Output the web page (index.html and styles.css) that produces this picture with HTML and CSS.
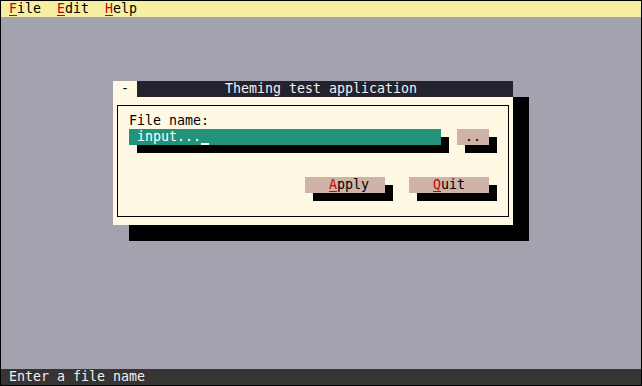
FILE: index.html
```html
<!DOCTYPE html>
<html>
<head>
<meta charset="utf-8">
<link rel="stylesheet" href="styles.css">
</head>
<body>
<div class="screen">
  <div class="menubar">
    <span class="menu-item"><span class="hk">F</span>ile</span>
    <span class="menu-item"><span class="hk">E</span>dit</span>
    <span class="menu-item"><span class="hk">H</span>elp</span>
  </div>
  <div class="desktop">
    <div class="dialog">
      <div class="titlebar">
        <span class="close">-</span>
        <span class="title">Theming test application</span>
      </div>
      <div class="body">
        <div class="frame">
          <div class="label">File name:</div>
          <div class="input-row">
            <div class="input">input...<span class="cursor"></span></div>
            <div class="btn btn-small">..</div>
          </div>
          <div class="actions">
            <div class="btn"><span class="hk">A</span>pply</div>
            <div class="btn"><span class="hk">Q</span>uit</div>
          </div>
        </div>
      </div>
    </div>
  </div>
  <div class="status">Enter a file name</div>
</div>
</body>
</html>
```
FILE: styles.css
```css
html, body {
  background: #000;
}
body {
  margin: 1px;
  font-family: "DejaVu Sans Mono", "Liberation Mono", monospace;
  font-size: 13.29px;
  line-height: 16px;
}
.screen {
  width: 640px;
  height: 384px;
  display: flex;
  flex-direction: column;
  white-space: nowrap;
}
.menubar {
  height: 16px;
  flex: none;
  background: #f7efa0;
  color: #000;
  display: flex;
}
.menu-item {
  padding: 0 8px;
}
.hk {
  color: #d00000;
  text-decoration: underline;
  text-decoration-thickness: 1px;
  text-underline-offset: 2px;
}
.desktop {
  flex: 1;
  background: #a3a3b0;
  position: relative;
}
.dialog {
  position: absolute;
  left: 112px;
  top: 64px;
  width: 400px;
  background: #fff9e3;
  box-shadow: 16px 16px 0 #000;
}
.titlebar {
  display: flex;
  height: 16px;
}
.close {
  width: 16px;
  padding-left: 8px;
  color: #000;
}
.title {
  flex: 1;
  background: #23222e;
  color: #f2f2f2;
  padding-left: 88px;
}
.body {
  height: 128px;
  padding: 8px 4px;
  box-sizing: border-box;
}
.frame {
  height: 112px;
  box-sizing: border-box;
  border: 1px solid #000;
  padding: 7px 19px 0 11px;
  color: #000;
}
.label {
  height: 16px;
}
.input-row {
  display: flex;
  gap: 16px;
  height: 16px;
}
.input {
  width: 304px;
  padding-left: 8px;
  background: #22937a;
  color: #fff;
  box-shadow: 8px 8px 0 #000;
}
.cursor {
  display: inline-block;
  width: 8px;
  height: 16px;
  vertical-align: top;
  box-shadow: inset 0 -2px 0 #fff;
}
.btn {
  width: 56px;
  padding-left: 24px;
  height: 16px;
  background: #cfb2a8;
  color: #000;
  box-shadow: 8px 8px 0 #000;
}
.btn-small {
  width: 24px;
  padding-left: 8px;
}
.actions {
  margin-top: 32px;
  display: flex;
  justify-content: flex-end;
  gap: 24px;
}
.status {
  height: 16px;
  flex: none;
  background: #373434;
  color: #f0f0f0;
  padding-left: 8px;
}
```
